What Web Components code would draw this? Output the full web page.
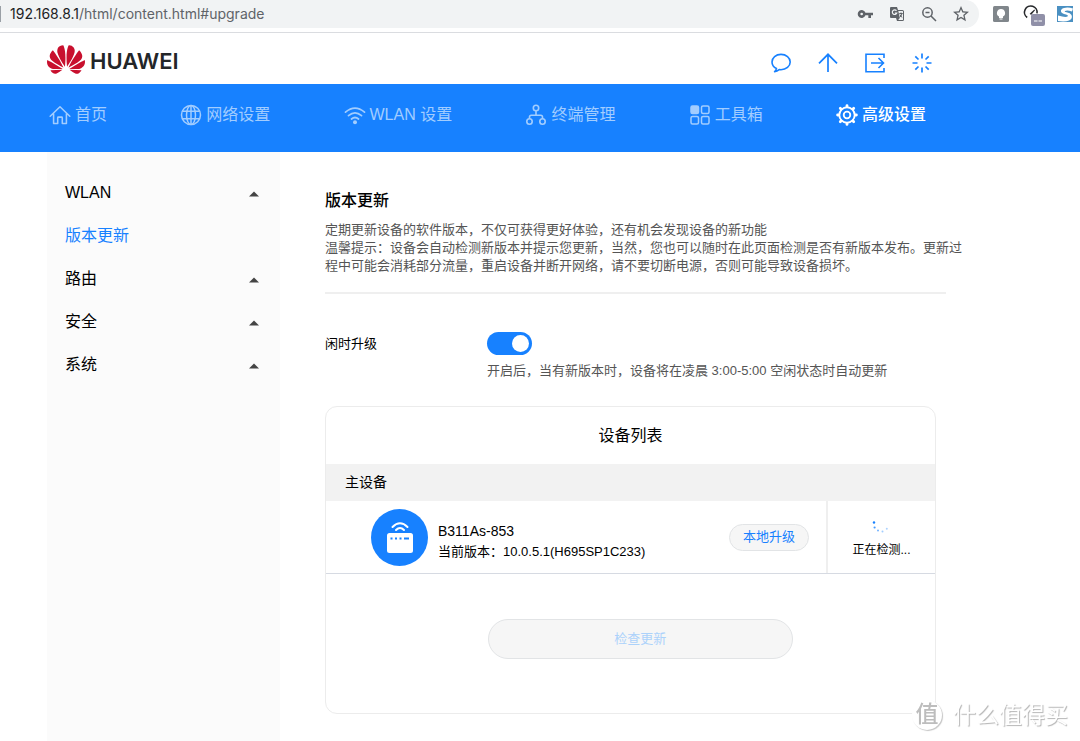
<!DOCTYPE html>
<html lang="zh-CN">
<head>
<meta charset="utf-8">
<title>版本更新</title>
<style>
  html, body { margin: 0; }
  body {
    font: 13px/18px "Liberation Sans", "Noto Sans CJK SC", sans-serif;
    color: #000;
    background: #fff;
  }
</style>
</head>
<body>
<router-app></router-app>

<script>
const ICONS = {
  key: ['0 0 24 24', '<path fill="#5f6368" d="M12.7 10a6 6 0 1 0 0 4H17v4h4v-4h3v-4zM7 14a2 2 0 1 1 0-4 2 2 0 0 1 0 4z"/>'],
  translate: ['0 0 16 16', '<path fill="#5f6368" d="M2 1h6l1 3h4.500q1.500 0 1.500 1.500v8q0 1.500-1.500 1.500H8l-1-3H2q-1 0-1-1V2q0-1 1-1z"/><path fill="#f1f3f4" d="M9.300 5H13.500q.500 0 .500.500v8q0 .500-.500.500H9.200l1.600-2z"/><path d="M10.300 7.500h3.400M12 6.500v1M13 7.500q-.500 2.500-2.200 3.700M11 8.500q.800 2 2.300 3" fill="none" stroke="#5f6368" stroke-width="1"/><path d="M7.500 4.800a2.300 2.300 0 1 0 .300 2.200H5.800" fill="none" stroke="#f1f3f4" stroke-width="1.200"/>'],
  zoomout: ['0 0 16 16', '<g fill="none" stroke="#5f6368" stroke-width="1.500"><circle cx="6.500" cy="6.500" r="4.700"/><path d="M10 10l5 5M4.500 6.500h4"/></g>'],
  star: ['2 2 20 20', '<path fill="#5f6368" d="M22 9.240l-7.190-.620L12 2 9.190 8.630 2 9.240l5.460 4.730L5.820 21 12 17.270 18.180 21l-1.630-7.030L22 9.240zM12 15.400l-3.760 2.270 1-4.280-3.320-2.880 4.380-.380L12 6.100l1.710 4.040 4.380.380-3.320 2.880 1 4.280L12 15.400z"/>'],
  bulb: ['0 0 16 16', '<rect width="16" height="16" rx="1.500" fill="#80868b"/><path fill="#fff" d="M8 3a4 4 0 0 0-2 7.500V12h4v-1.500A4 4 0 0 0 8 3zM6.500 12.600h3v.900h-3z"/>'],
  gauge: ['0 0 24 24', '<path d="M6.200 15.500A6.300 6.300 0 1 1 16 11.300" fill="none" stroke="#26282b" stroke-width="1.600"/><path d="M8.700 11.800l4.600-4.300.800.800-4 4.600z" fill="#26282b"/><rect x="10" y="12" width="14" height="12" rx="2" fill="#9090a8"/><path d="M13 19h3.500M17.500 19H21" stroke="#fff" stroke-width="1.200"/>'],
  wave: ['0 0 16 16', '<rect width="16" height="16" fill="#4a90c2"/><path fill="#fff" d="M16 2.500Q11 1 7 2 3.500 3 4 5.500q.500 2 5 3 2.500.700 1.800 1.800Q9 12 1 9.500V15q7 1 11-.500 4-2 2.500-5.500-1-2-5-2.700Q7 6 8 5q2-1 7 .500z"/>'],
  flower: ['0 2.960 24 18.100', '<path fill="#c8102e" d="M3.670 6.140S1.820 7.910 1.720 9.780v.350c.080 1.510 1.220 2.400 1.220 2.400 1.830 1.790 6.260 4.040 7.300 4.550 0 0 .060.030.100-.010l.020-.040v-.040C7.520 10.800 3.670 6.140 3.670 6.140zM9.650 18.600c-.020-.080-.100-.080-.100-.080l-7.380.260c.800 1.430 2.150 2.530 3.560 2.200.960-.250 3.160-1.780 3.880-2.300.060-.050.040-.090.040-.090zm.080-.780C6.490 15.630.210 12.280.210 12.280c-.150.460-.200.900-.210 1.300v.070c0 1.070.400 1.820.400 1.820.800 1.690 2.340 2.200 2.340 2.200.700.300 1.400.310 1.400.310.120.020 4.400 0 5.540 0 .050 0 .080-.050.080-.050v-.060c0-.030-.030-.050-.030-.050zM9.060 3.190a3.420 3.420 0 00-2.570 3.150v.410c.030.600.160 1.050.160 1.050.660 2.900 3.860 7.650 4.550 8.650.050.050.100.030.100.030a.100.100 0 00.060-.100c1.060-10.600-1.110-13.420-1.110-13.420-.320.020-1.190.230-1.190.230zm8.299 2.270s-.490-1.800-2.440-2.280c0 0-.570-.140-1.170-.220 0 0-2.180 2.810-1.120 13.430.010.070.060.080.060.080.070.030.100-.030.100-.030.720-1.030 3.900-5.760 4.550-8.640 0 0 .360-1.400.020-2.340zm-2.920 13.070s-.070 0-.090.050c0 0-.010.070.030.100.700.510 2.850 2 3.880 2.300 0 0 .160.050.430.060h.140c.690-.020 1.900-.370 3-2.260l-7.400-.250zm7.830-8.410c.140-2.060-1.940-3.970-1.940-3.980 0 0-3.850 4.660-6.670 10.800 0 0-.030.080.020.130l.040.010h.060c1.060-.530 5.460-2.770 7.280-4.540 0 0 1.150-.930 1.210-2.420zm1.520 2.140s-6.280 3.370-9.520 5.550c0 0-.050.040-.030.110 0 0 .030.060.070.060 1.160 0 5.560 0 5.670-.020 0 0 .570-.020 1.270-.290 0 0 1.560-.500 2.370-2.270 0 0 .730-1.450.170-3.140z"/>'],
  comment: ['0 0 20 20', '<path d="M5.500 15.400C2.800 14.300 1 12 1 9c0-4.300 3.900-7.600 9-7.600s9.200 3.300 9.200 7.600-4.100 7.700-9.200 7.700l-1.800-.100Q6 18.500 3.600 18.700 5 17.500 5.500 15.400z" fill="none" stroke="currentColor" stroke-width="1.600" stroke-linejoin="round"/>'],
  up: ['0 0 20 20', '<path d="M10 19V1.500M1 10.300l9-9 9 9" fill="none" stroke="currentColor" stroke-width="1.700"/>'],
  exit: ['0 0 20 20', '<path d="M19 5V1.200H1v17.600h18V15M6 10h12.500M13.500 5l5 5-5 5" fill="none" stroke="currentColor" stroke-width="1.600"/>'],
  burst: ['0 0 20 20', '<path d="M10 .500v5M10 14.500v5M.500 10h5M14.500 10h5M3.300 3.300l3.200 3.200M13.500 13.500l3.200 3.200M3.300 16.700l3.200-3.200M13.500 6.500l3.200-3.200" fill="none" stroke="currentColor" stroke-width="1.700"/>'],
  home: ['0 0 24 22', '<path d="M1.300 12.300L12 2l10.700 10.300M5 10v10.200h4.500V14q0-.700.700-.700h3.600q.700 0 .700.700v6.200H19V10" fill="none" stroke="currentColor" stroke-width="1.700" stroke-linejoin="round" stroke-linecap="round"/>'],
  globe: ['0 0 22 22', '<g fill="none" stroke="currentColor" stroke-width="1.500"><circle cx="11" cy="11" r="9.500"/><ellipse cx="11" cy="11" rx="4.500" ry="9.500"/><path d="M11 1.500v19M2.500 7.200h17M2.500 14.800h17"/></g>'],
  wifi: ['0 0 22 22', '<g fill="none" stroke="currentColor" stroke-width="1.700" stroke-linecap="round"><path d="M1.500 8.200q9.500-8 19 0M4.500 11.700q6.500-5.500 13 0M7.500 15q3.500-3 7 0"/></g><circle cx="11" cy="18.300" r="2" fill="currentColor"/>'],
  nodes: ['0 0 22 22', '<g fill="none" stroke="currentColor" stroke-width="1.600"><circle cx="11" cy="4" r="2.700"/><circle cx="4.500" cy="17.500" r="2.700"/><circle cx="17.500" cy="17.500" r="2.700"/><path d="M11 6.700v4.500M4.500 14.800v-1.800q0-1.800 1.800-1.800h9.400q1.800 0 1.800 1.800v1.800"/></g>'],
  grid: ['0 0 22 22', '<g stroke="currentColor" stroke-width="1.500" fill="none"><rect x="2" y="2" width="7.500" height="7.500" rx="1.500" fill="currentColor"/><rect x="12.500" y="2" width="7.500" height="7.500" rx="1.500"/><rect x="2" y="12.500" width="7.500" height="7.500" rx="1.500"/><rect x="12.500" y="12.500" width="7.500" height="7.500" rx="1.500"/></g>'],
  gear: ['0 0 22 22', '<g fill="none" stroke="currentColor"><circle cx="11" cy="11" r="7.700" stroke-width="1.900"/><circle cx="11" cy="11" r="3.300" stroke-width="1.800"/><path stroke-width="2.800" stroke-linecap="round" d="M11 1.600v.800M11 19.600v.800M1.600 11h.800M19.600 11h.800M4.300 4.300l.600.600M17.100 17.100l.600.600M4.300 17.700l.600-.600M17.100 4.900l.600-.600"/></g>'],
  caret: ['0 0 10 6', '<path d="M0 5.500L5 .500l5 5z" fill="#444"/>'],
  router: ['0 0 57 57', '<circle cx="28.500" cy="28.500" r="28.500" fill="#1781ff"/><rect x="16" y="24" width="26" height="20" rx="2.500" fill="#fff"/><path d="M19.500 29.500h2M24 29.500h2M28.500 29.500h2M33 29.500h5" stroke="#1781ff" stroke-width="2"/><path d="M21.500 18q7.500-7.500 15 0M25 21q4-4 8 0" fill="none" stroke="#fff" stroke-width="2" stroke-linecap="round"/>'],
  dots: ['0 0 16 14', '<g fill="#1781ff"><circle cx="2" cy="2.500" r="1.200"/><circle cx="2.600" cy="7.500" r="1.100" opacity=".8"/><circle cx="6" cy="10.500" r="1" opacity=".6"/><circle cx="10.500" cy="11.500" r="1" opacity=".4"/><circle cx="14.800" cy="8.700" r="1" opacity=".35"/></g>']
};

function define(name, render) {
  customElements.define(name, class extends HTMLElement {
    constructor() {
      super();
      this.attachShadow({ mode: 'open' });
    }
    connectedCallback() {
      const t = document.createElement('template');
      t.innerHTML = render(this);
      this.shadowRoot.replaceChildren(t.content.cloneNode(true));
    }
  });
}

define('app-icon', el => {
  const [box, body] = ICONS[el.getAttribute('name')];
  const w = el.getAttribute('w');
  const h = el.getAttribute('h') || w;
  return `<style>:host{display:block;flex:none} svg{display:block}</style>
  <svg width="${w}" height="${h}" viewBox="${box}" aria-hidden="true">${body}</svg>`;
});

define('icon-button', el => `
  <style>
    :host { display: block; flex: none; }
    button { display: block; margin: 0; padding: 0; border: 0; background: none; color: inherit; }
  </style>
  <button type="button" aria-label="${el.getAttribute('label')}">
    <app-icon name="${el.getAttribute('icon')}" w="${el.getAttribute('size')}"></app-icon>
  </button>`);

define('browser-bar', () => `
  <style>
    :host { display: flex; height: 32px; border-bottom: 1px solid #dadce0; background: #fff; }
    .address { flex: 1; display: flex; align-items: center; height: 28px; padding-right: 10px;
      background: #f1f3f4; border-radius: 0 14px 14px 0; }
    .edge { width: 1px; height: 16px; background: #9aa0a6; }
    .url { flex: 1; margin-left: 9px; font: 14px/20px Inter, sans-serif; color: #5f6368; }
    .host { color: #202124; }
    .tools { display: flex; align-items: center; gap: 16px; }
    .extensions { display: flex; align-items: center; gap: 12px; height: 32px; padding: 0 7px 0 14px; }
    .extensions { height: 28px; }
  </style>
  <div class="address">
    <span class="edge"></span>
    <span class="url"><span class="host">192.168.8.1</span>/html/content.html#upgrade</span>
    <div class="tools">
      <icon-button icon="key" size="16" label="密码"></icon-button>
      <icon-button icon="translate" size="16" label="翻译"></icon-button>
      <icon-button icon="zoomout" size="16" label="缩放"></icon-button>
      <icon-button icon="star" size="16" label="收藏"></icon-button>
    </div>
  </div>
  <div class="extensions">
    <icon-button icon="bulb" size="16" label="提示"></icon-button>
    <icon-button icon="gauge" size="24" label="测速"></icon-button>
    <icon-button icon="wave" size="16" label="扩展"></icon-button>
  </div>`);

define('site-header', () => `
  <style>
    :host { display: block; }
    .inner { box-sizing: border-box; max-width: 986px; height: 51px; margin: 0 auto; padding-right: 101px;
      display: flex; align-items: center; justify-content: space-between; }
    .brand { display: flex; align-items: center; gap: 5px; padding-top: 2px; color: #232629;
      font: 600 22px/28px Inter, sans-serif; text-decoration: none; }
    .brand span { padding-top: 2px; }
    .actions { display: flex; gap: 27px; padding-top: 9px; color: #1781ff; }
  </style>
  <div class="inner">
    <a class="brand" href="#home"><app-icon name="flower" w="38" h="29"></app-icon><span>HUAWEI</span></a>
    <div class="actions">
      <icon-button icon="comment" size="20" label="消息"></icon-button>
      <icon-button icon="up" size="20" label="升级"></icon-button>
      <icon-button icon="exit" size="20" label="退出"></icon-button>
      <icon-button icon="burst" size="20" label="加载"></icon-button>
    </div>
  </div>`);

define('nav-item', el => `
  <style>
    :host { display: block; flex: none; }
    a { display: flex; align-items: center; gap: 4px; color: #a2cdff; font-size: 16px; line-height: 24px;
      text-decoration: none; white-space: nowrap; }
    :host([active]) a { color: #fff; font-weight: 500; }
  </style>
  <a href="${el.getAttribute('href')}"><app-icon name="${el.getAttribute('icon')}" w="22"></app-icon><slot></slot></a>`);

define('main-nav', () => `
  <style>
    :host { display: block; background: #1781ff; }
    nav { box-sizing: border-box; max-width: 986px; height: 68px; margin: 0 auto; padding: 0 107px 6px 2px;
      display: flex; align-items: center; justify-content: space-between; }
  </style>
  <nav>
    <nav-item icon="home" href="#home">首页</nav-item>
    <nav-item icon="globe" href="#network">网络设置</nav-item>
    <nav-item icon="wifi" href="#wlan">WLAN 设置</nav-item>
    <nav-item icon="nodes" href="#devices">终端管理</nav-item>
    <nav-item icon="grid" href="#tools">工具箱</nav-item>
    <nav-item icon="gear" href="#advanced" active>高级设置</nav-item>
  </nav>`);

define('side-item', el => `
  <style>
    :host { display: block; }
    a { display: flex; align-items: center; justify-content: space-between; height: 43px;
      font-size: 16px; color: #000; text-decoration: none; }
    app-icon { padding-top: 2px; }
    :host([current]) a { color: #1781ff; }
  </style>
  <a href="${el.getAttribute('href')}"><span><slot></slot></span>${el.hasAttribute('current') ? '' : '<app-icon name="caret" w="10" h="6"></app-icon>'}</a>`);

define('side-menu', () => `
  <style>
    :host { display: block; box-sizing: border-box; padding: 19px 21px 0 18px; background: #fbfbfb; }
  </style>
  <nav>
    <side-item href="#wlansettings">WLAN</side-item>
    <side-item href="#upgrade" current>版本更新</side-item>
    <side-item href="#routing">路由</side-item>
    <side-item href="#security">安全</side-item>
    <side-item href="#system">系统</side-item>
  </nav>`);

define('idle-upgrade', () => `
  <style>
    :host { display: grid; grid-template-columns: 162px 1fr; row-gap: 7px; align-items: center; }
    label { color: #000; }
    input { appearance: none; display: block; box-sizing: border-box; width: 45px; height: 23px; margin: 0; padding: 3px;
      border-radius: 12px; background: #ccc; }
    input::before { content: ""; display: block; width: 17px; height: 17px; border-radius: 50%; background: #fff; }
    input:checked { background: #1781ff; }
    input:checked::before { margin-left: auto; }
    p { grid-column: 2; margin: 0; color: #555; }
  </style>
  <label for="idle">闲时升级</label>
  <input type="checkbox" id="idle" aria-describedby="note" checked>
  <p id="note">开启后，当有新版本时，设备将在凌晨 3:00-5:00 空闲状态时自动更新</p>`);

define('pill-button', el => `
  <style>
    :host { display: block; }
    button { box-sizing: border-box; width: 100%; height: 100%; margin: 0; padding: 0 12px; border: 1px solid #e2e4e6;
      border-radius: 20px; background: #f6f6f6; color: #1781ff; font: inherit; }
    button:disabled { color: #acd2fb; }
  </style>
  <button type="button" ${el.hasAttribute('disabled') ? 'disabled' : ''}><slot></slot></button>`);

define('device-row', el => `
  <style>
    :host { display: flex; align-items: stretch; height: 72px; border-bottom: 1px solid #d6dae2; }
    .info { flex: 1; display: flex; align-items: center; gap: 10px; padding: 0 17px 0 45px; }
    .text { flex: 1; padding-top: 7px; }
    .name { font-size: 14px; line-height: 22px; }
    .version { line-height: 20px; }
    pill-button { width: 80px; height: 27px; }
    .status { width: 109px; border-left: 2px solid #efefef; display: flex; flex-direction: column;
      align-items: center; justify-content: center; gap: 7px; padding-top: 5px; box-sizing: border-box;
      font-size: 12px; line-height: 18px; }
    .status app-icon { padding-right: 4px; }
  </style>
  <div class="info">
    <app-icon name="router" w="57"></app-icon>
    <div class="text">
      <div class="name">${el.getAttribute('name')}</div>
      <div class="version">当前版本：${el.getAttribute('version')}</div>
    </div>
    <pill-button>本地升级</pill-button>
  </div>
  <div class="status"><app-icon name="dots" w="16" h="14"></app-icon><span>正在检测...</span></div>`);

define('device-card', () => `
  <style>
    :host { display: block; box-sizing: border-box; border: 1px solid #ececec; border-radius: 12px; }
    h3 { margin: 0; font-size: 16px; font-weight: 400; line-height: 57px; text-align: center; }
    .group { padding-left: 19px; font-size: 14px; line-height: 37px; background: #f2f2f2; }
    .check { width: 50%; height: 40px; margin: 45px auto 54px 162px; }
  </style>
  <h3>设备列表</h3>
  <div class="group">主设备</div>
  <device-row name="B311As-853" version="10.0.5.1(H695SP1C233)"></device-row>
  <pill-button class="check" disabled>检查更新</pill-button>`);

define('upgrade-page', () => `
  <style>
    :host { display: block; padding-top: 38px; }
    h2 { margin: 0 0 9px; font-size: 16px; font-weight: 500; line-height: 22px; }
    p { margin: 0; color: #555; }
    .intro { max-width: 640px; }
    hr { max-width: 621px; margin: 17px 0 38px; border: 0; border-top: 2px solid #efefef; }
    device-card { max-width: 611px; margin: 26px 0 27px; }
  </style>
  <h2>版本更新</h2>
  <div class="intro">
    <p>定期更新设备的软件版本，不仅可获得更好体验，还有机会发现设备的新功能</p>
    <p>温馨提示：设备会自动检测新版本并提示您更新，当然，您也可以随时在此页面检测是否有新版本发布。更新过程中可能会消耗部分流量，重启设备并断开网络，请不要切断电源，否则可能导致设备损坏。</p>
  </div>
  <hr>
  <idle-upgrade></idle-upgrade>
  <device-card></device-card>`);

define('site-watermark', () => `
  <style>
    :host { position: fixed; right: 12px; bottom: 10px; display: flex; align-items: center; gap: 11px;
      pointer-events: none; color: #fff; text-shadow: 1px 1px 1px #b4b4b4; font-size: 23px; line-height: 32px; }
    .seal { width: 30px; height: 30px; border-radius: 50%; background: #fff; box-shadow: 1px 1px 1px #c4c4c4;
      color: #bdbdbd; text-shadow: none; font-size: 23px; font-weight: 500; line-height: 28px; text-align: center; }
  </style>
  <span class="seal">值</span><span>什么值得买</span>`);

define('router-app', () => `
  <style>
    :host { display: flex; flex-direction: column; min-height: 100vh; }
    main { flex: 1; box-sizing: border-box; width: 100%; max-width: 986px; margin: 0 auto;
      display: grid; grid-template-columns: 233px 1fr; column-gap: 45px; }
  </style>
  <browser-bar></browser-bar>
  <site-header></site-header>
  <main-nav></main-nav>
  <main>
    <side-menu></side-menu>
    <upgrade-page></upgrade-page>
  </main>
  <site-watermark></site-watermark>`);
</script>
</body>
</html>
